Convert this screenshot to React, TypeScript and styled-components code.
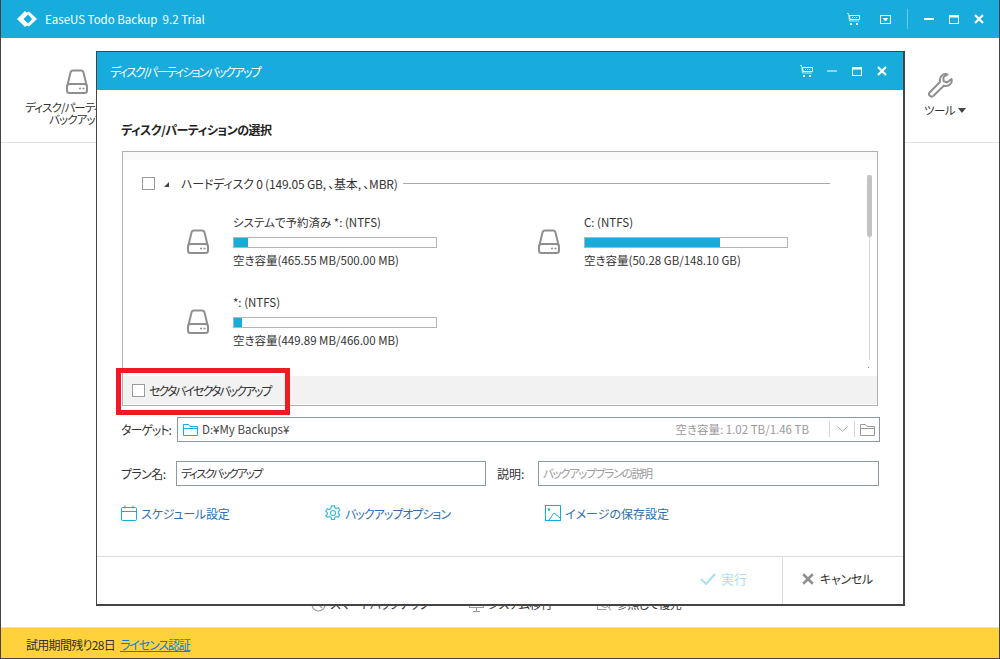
import styled, { createGlobalStyle } from "styled-components";

const GlobalStyle = createGlobalStyle`
    html, body {
        margin: 0;
        padding: 0;
        background: #fff;
    }
    * {
        box-sizing: border-box;
    }
    body {
        font-family: "Noto Sans CJK JP", "Open Sans", sans-serif;
        font-size: 12px;
        font-feature-settings: "palt";
        color: #333;
    }
`;

const Page = styled.div`
    position: relative;
    width: 1000px;
    height: 659px;
    display: flex;
    flex-direction: column;
    border-left: 1px solid #444;
    border-right: 1px solid #444;
    border-bottom: 1px solid #444;
    overflow: hidden;
`;

const TitleBar = styled.div`
    height: 38px;
    flex: none;
    display: flex;
    align-items: center;
    background: #17acdb;
    color: #fff;
    padding-left: 15px;
`;

const AppTitle = styled.span`
    margin-left: 7px;
    font-size: 11.5px;
    white-space: pre;
`;

const WindowControls = styled.div`
    margin-left: auto;
    display: flex;
    align-items: center;
    padding-right: 8px;
`;

const ControlSlot = styled.div<{ $w: number }>`
    width: ${p => p.$w}px;
    display: flex;
    justify-content: center;
    align-items: center;
`;

const Separator = styled.div`
    width: 1px;
    height: 20px;
    background: rgba(255, 255, 255, 0.35);
    margin: 0 8px 0 9px;
`;

const Toolbar = styled.div`
    height: 105px;
    flex: none;
    display: flex;
    justify-content: space-between;
    padding: 31px 33px 0 24px;
    border-bottom: 1px solid #e3e3e3;
`;

const ToolItem = styled.div`
    display: flex;
    flex-direction: column;
    align-items: center;
    color: #333;
    font-size: 11.5px;
    line-height: 12px;
    text-align: center;
    white-space: nowrap;
`;

const ToolLabel = styled.div`
    margin-top: 7px;
    letter-spacing: -0.9px;
`;

const WrenchSlot = styled.div`
    margin: 4px 9px 0 0;
    height: 25px;
`;

const ToolsLabel = styled.div`
    margin-top: 6px;
    display: flex;
    align-items: center;
    gap: 3px;
    letter-spacing: -0.6px;
`;

const Caret = styled.span`
    width: 0;
    height: 0;
    border-left: 4px solid transparent;
    border-right: 4px solid transparent;
    border-top: 5px solid #444;
`;

const Main = styled.div`
    flex: 1;
    display: flex;
    align-items: flex-end;
    padding: 0 0 15px 310px;
`;

const Shortcut = styled.div<{ $w: number }>`
    width: ${p => p.$w}px;
    display: flex;
    align-items: center;
    gap: 4px;
    font-size: 12px;
    line-height: 16px;
    letter-spacing: -0.6px;
    color: #333;
`;

const TrialBar = styled.div`
    height: 31px;
    flex: none;
    display: flex;
    align-items: center;
    gap: 5px;
    padding: 2px 0 0 25px;
    background: #ffd13b;
    border-top: 1px solid #e2e2e2;
    font-size: 12px;
    color: #333;
`;

const TrialText = styled.span`
    letter-spacing: -0.7px;
`;

const LicenseLink = styled.a`
    color: #0a7ad6;
    text-decoration: underline;
    letter-spacing: -1.1px;
`;

const Dialog = styled.div`
    position: absolute;
    left: 95px;
    top: 51px;
    width: 809px;
    height: 555px;
    display: flex;
    flex-direction: column;
    background: #fff;
    border: 2px solid #444;
    border-width: 1px 2px 2px 1px;
`;

const DialogHeader = styled.div`
    height: 38px;
    flex: none;
    display: flex;
    align-items: center;
    padding: 0 9px 0 13px;
    background: #17acdb;
    color: #fff;
`;

const DialogTitle = styled.span`
    letter-spacing: -1.8px;
`;

const DialogControls = styled.div`
    margin-left: auto;
    display: flex;
    align-items: center;
`;

const DialogBody = styled.div`
    flex: 1;
    display: flex;
    flex-direction: column;
    padding: 31px 24px 0 24px;
`;

const SectionTitle = styled.div`
    font-size: 12px;
    font-weight: 700;
    line-height: 18px;
    letter-spacing: -0.5px;
    color: #222;
`;

const ListBox = styled.div`
    position: relative;
    margin: 12px 0 0 1px;
    width: 756px;
    height: 255px;
    display: flex;
    flex-direction: column;
    border: 1px solid #b0b0b0;
`;

const ListScroll = styled.div`
    position: relative;
    flex: 1;
    padding: 8px 0 0 19px;
    border-top: 8px solid #fafafa;
`;

const DiskHeader = styled.div`
    display: flex;
    align-items: center;
    height: 20px;
    margin-top: 5px;
    margin-right: 47px;
`;

const CheckBox = styled.span`
    width: 13px;
    height: 13px;
    flex: none;
    background: #fff;
    border: 1px solid #9a9a9a;
`;

const Triangle = styled.span`
    width: 0;
    height: 0;
    margin: 2px 12px 0 9px;
    border-left: 5px solid transparent;
    border-bottom: 5px solid #444;
`;

const DiskName = styled.span`
    white-space: nowrap;
    letter-spacing: -0.2px;
    color: #333;
`;

const Rule = styled.span`
    flex: 1;
    height: 1px;
    margin-left: 5px;
    background: #aaa;
`;

const PartitionGrid = styled.div`
    display: grid;
    grid-template-columns: 351px 351px;
    grid-auto-rows: 80px;
    margin: 8px 0 0 45px;
`;

const Partition = styled.div`
    display: flex;
    align-items: center;
    gap: 24px;
`;

const PartitionInfo = styled.div`
    width: 204px;
    display: flex;
    flex-direction: column;
    font-size: 11.5px;
    line-height: 17px;
    white-space: nowrap;
`;

const Bar = styled.div`
    height: 11px;
    margin: 6px 0 4px;
    background: #fff;
    border: 1px solid #b4b4b4;
`;

const BarFill = styled.div`
    height: 100%;
    background: #17acdb;
`;

const ScrollThumb = styled.div`
    position: absolute;
    right: 5px;
    top: 15px;
    width: 5px;
    height: 62px;
    border-radius: 2px;
    background: #c3c3c3;
`;

const ScrollTrack = styled.div`
    position: absolute;
    right: 7px;
    top: 77px;
    width: 1px;
    height: 123px;
    background: #d8d8d8;
`;

const ScrollDot = styled.div`
    position: absolute;
    right: 8px;
    top: 207px;
    width: 1px;
    height: 1px;
    background: #888;
`;

const SectorStrip = styled.div`
    height: 29px;
    flex: none;
    display: flex;
    align-items: center;
    gap: 4px;
    padding-left: 9px;
    background: #f2f2f2;
    border-bottom: 1px solid #fff;
    letter-spacing: -2px;
`;

const RedMark = styled.div`
    position: absolute;
    left: -7px;
    top: 216px;
    width: 174px;
    height: 47px;
    border: 5px solid #ed1c24;
    pointer-events: none;
`;

const FormRow = styled.div<{ $top: number }>`
    display: flex;
    align-items: center;
    margin-top: ${p => p.$top}px;
    height: 25px;
`;

const FieldLabel = styled.label<{ $w: number; $tight: number }>`
    width: ${p => p.$w}px;
    flex: none;
    color: #333;
    letter-spacing: ${p => p.$tight}px;
    white-space: nowrap;
`;

const TargetField = styled.div`
    flex: 1;
    height: 25px;
    display: flex;
    align-items: center;
    padding: 0 0 1px 5px;
    border: 1px solid #8b9aa1;
    margin-right: -1px;
`;

const TargetPath = styled.span`
    margin-left: 4px;
    color: #444;
    font-size: 11.5px;
`;

const FreeSpace = styled.span`
    margin-left: auto;
    color: #9a9a9a;
    font-size: 11.5px;
`;

const FieldDivider = styled.span<{ $left: number }>`
    width: 1px;
    height: 16px;
    margin-left: ${p => p.$left}px;
    background: #d5d5d5;
`;

const TargetButton = styled.span`
    width: 24px;
    display: flex;
    justify-content: center;
`;

const TextField = styled.div<{ $w: number; $muted?: boolean }>`
    width: ${p => p.$w}px;
    flex: none;
    height: 25px;
    line-height: 22px;
    padding-left: 4px;
    border: 1px solid #8b9aa1;
    color: ${p => (p.$muted ? "#9a9a9a" : "#333")};
    font-size: 11.5px;
    letter-spacing: ${p => (p.$muted ? -1.4 : -1.9)}px;
`;

const PlanLabel = styled(FieldLabel)`
    margin-left: 11px;
`;

const Links = styled.div`
    display: flex;
    margin-top: 15px;
    height: 24px;
    align-items: center;
`;

const LinkItem = styled.div<{ $w: number; $tight?: number }>`
    width: ${p => p.$w}px;
    flex: none;
    display: flex;
    align-items: center;
    gap: 4px;
    color: #2f6db0;
    font-size: 12px;
    letter-spacing: ${p => p.$tight ?? 0}px;
`;

const Footer = styled.div`
    height: 48px;
    flex: none;
    display: flex;
    justify-content: flex-end;
    border-top: 1px solid #dcdcdc;
`;

const RunButton = styled.div`
    width: 122px;
    display: flex;
    align-items: center;
    padding: 0 0 4px 40px;
    gap: 5px;
    color: #a9dff0;
    font-size: 13px;
`;

const CancelButton = styled.div`
    width: 121px;
    display: flex;
    align-items: center;
    gap: 6px;
    padding: 0 0 4px 19px;
    border-left: 1px solid #dcdcdc;
    color: #333;
    font-size: 12px;
    letter-spacing: -0.3px;
`;

function DiskIcon() {
    return (
        <svg width="22" height="25" viewBox="0 0 22 25" fill="none" stroke="#8f8f8f" strokeWidth="2">
            <path d="M1.500 16 L4.500 3.500 Q5 1.500 7 1.500 H15 Q17 1.500 17.500 3.500 L20.500 16" />
            <rect x="1" y="15" width="20" height="9" rx="2.500" />
            <path d="M13 19.500h2M16.500 19.500h2" strokeWidth="1.600" />
        </svg>
    );
}

function CartIcon() {
    return (
        <svg width="13" height="12" viewBox="0 0 13 12" fill="none" stroke="#fff" strokeWidth="1">
            <path d="M0 .5h1.500l1 7.500h9.500" opacity=".7" />
            <path d="M2.500 2.500h10v4h-9.500z" />
            <path d="M5 4.500h1M7 4.500h1M9 4.500h1" />
            <path d="M3 10h2v2H3zM9 10h2v2H9z" fill="#fff" stroke="none" />
        </svg>
    );
}

function MinimizeIcon({ faded }: { faded?: boolean }) {
    return (
        <svg width="10" height="2" viewBox="0 0 10 2">
            <rect width="10" height="2" fill={faded ? "#8fd9ef" : "#fff"} />
        </svg>
    );
}

function MaximizeIcon() {
    return (
        <svg width="10" height="9" viewBox="0 0 10 9" fill="none" stroke="#fff">
            <rect x="0.500" y="0.500" width="9" height="8" />
            <rect x="0" y="0" width="10" height="2.500" fill="#fff" stroke="none" />
        </svg>
    );
}

function CloseIcon({ color = "#fff", size = 10 }: { color?: string; size?: number }) {
    return (
        <svg width={size} height={size} viewBox="0 0 10 10" stroke={color} strokeWidth="2.200">
            <path d="M1 1l8 8M9 1l-8 8" />
        </svg>
    );
}

function Logo() {
    return (
        <svg width="22" height="16" viewBox="0 0 22 16" fill="#fff">
            <path d="M9 0 L1 8 L9 16 L12.500 13 L7.500 8 L12.500 3 Z" />
            <path d="M13 0.500 L10.500 1.500 L16 8 L10.500 14.500 L13 15.500 L21 8 Z" />
        </svg>
    );
}

function Wrench() {
    return (
        <svg width="25" height="25" viewBox="0 0 25 25" fill="none" stroke="#8f8f8f" strokeWidth="2" strokeLinejoin="round">
            <path d="M23.500 6 L19 9.500 L15.500 8 L15.500 4 L19.500 1.500 C15 0 11 3.500 12 9 L1.800 19.200 C-.500 21.800 3 25 5.500 22.800 L15.800 12.800 C20.500 14 24.800 10.500 23.500 6 Z" />
        </svg>
    );
}

function FolderIcon({ color }: { color: string }) {
    return (
        <svg width="15" height="13" viewBox="0 0 15 13" fill="none" stroke={color}>
            <path d="M.5 12.500V1.500h5l1.500 2h7.500v9z" />
            <path d="M.5 5.500h14" />
        </svg>
    );
}

function CalendarIcon() {
    return (
        <svg width="16" height="16" viewBox="0 0 16 16" fill="none" stroke="#17acdb">
            <rect x="0.500" y="2.500" width="15" height="13" rx="1" />
            <path d="M.5 6.500h15M4 .5v3M12 .5v3" />
        </svg>
    );
}

function GearIcon() {
    return (
        <svg width="16" height="16" viewBox="0 0 16 16" fill="none" stroke="#3dbbe0" strokeWidth="1.200">
            <path d="M6.500.8h3l.4 2 1.500.8 1.900-.8 1.500 2.600-1.500 1.300v1.700l1.500 1.300-1.500 2.600-1.900-.8-1.500.8-.4 2h-3l-.4-2-1.500-.8-1.900.8L.8 10.700l1.500-1.300V7.700L.8 6.400l1.500-2.600 1.900.8 1.500-.8z" />
            <circle cx="8" cy="8" r="2.500" />
        </svg>
    );
}

function ImageIcon() {
    return (
        <svg width="16" height="16" viewBox="0 0 16 16" fill="none" stroke="#17acdb">
            <rect x="0.500" y="0.500" width="15" height="15" />
            <circle cx="4" cy="4.500" r="1.200" fill="#17acdb" stroke="none" />
            <path d="M4 15l5-7 6 5" />
        </svg>
    );
}

function SmartIcon() {
    return (
        <svg width="15" height="15" viewBox="0 0 15 15" fill="none" stroke="#999" strokeWidth="1.200">
            <circle cx="7.500" cy="7.500" r="6.500" />
            <path d="M4 4l7 7" />
        </svg>
    );
}

function MonitorIcon() {
    return (
        <svg width="15" height="15" viewBox="0 0 15 15" fill="none" stroke="#999">
            <rect x="0.500" y="0.500" width="14" height="10" />
            <path d="M7.500 10.500v4M4 14.500h7" />
        </svg>
    );
}

function BrowseIcon() {
    return (
        <svg width="15" height="15" viewBox="0 0 15 15" fill="none" stroke="#999">
            <path d="M.5.500h12v10M.5.500v12h9" />
            <circle cx="8" cy="7" r="3.500" />
            <path d="M10.500 9.500l3.500 4" />
        </svg>
    );
}

const partitions = [
    { name: "システムで予約済み *: (NTFS)", free: "空き容量(465.55 MB/500.00 MB)", used: 7 },
    { name: "C: (NTFS)", free: "空き容量(50.28 GB/148.10 GB)", used: 67 },
    { name: "*: (NTFS)", free: "空き容量(449.89 MB/466.00 MB)", used: 4 },
];

function App() {
    return (
        <>
            <GlobalStyle />
            <Page>
                <TitleBar>
                    <Logo />
                    <AppTitle>EaseUS Todo Backup  9.2 Trial</AppTitle>
                    <WindowControls>
                        <ControlSlot $w={37}><CartIcon /></ControlSlot>
                        <ControlSlot $w={26}>
                            <svg width="11" height="9" viewBox="0 0 11 9" fill="none" stroke="#fff">
                                <rect x="0.500" y="0.500" width="10" height="8" />
                                <path d="M3.500 3.500h4l-2 2.500z" fill="#fff" />
                            </svg>
                        </ControlSlot>
                        <Separator />
                        <ControlSlot $w={25}><MinimizeIcon /></ControlSlot>
                        <ControlSlot $w={25}><MaximizeIcon /></ControlSlot>
                        <ControlSlot $w={25}><CloseIcon /></ControlSlot>
                    </WindowControls>
                </TitleBar>

                <Toolbar>
                    <ToolItem>
                        <DiskIcon />
                        <ToolLabel>ディスク/パーティション<br />バックアップ</ToolLabel>
                    </ToolItem>
                    <ToolItem>
                        <WrenchSlot><Wrench /></WrenchSlot>
                        <ToolsLabel>ツール <Caret /></ToolsLabel>
                    </ToolItem>
                </Toolbar>

                <Main>
                    <Shortcut $w={158}><SmartIcon />スマートバックアップ</Shortcut>
                    <Shortcut $w={128}><MonitorIcon />システム移行</Shortcut>
                    <Shortcut $w={120}><BrowseIcon />参照して復元</Shortcut>
                </Main>

                <TrialBar>
                    <TrialText>試用期間残り28日</TrialText>
                    <LicenseLink>ライセンス認証</LicenseLink>
                </TrialBar>

                <Dialog>
                    <DialogHeader>
                        <DialogTitle>ディスク/パーティションバックアップ</DialogTitle>
                        <DialogControls>
                            <ControlSlot $w={25}><CartIcon /></ControlSlot>
                            <ControlSlot $w={25}><MinimizeIcon faded /></ControlSlot>
                            <ControlSlot $w={25}><MaximizeIcon /></ControlSlot>
                            <ControlSlot $w={25}><CloseIcon /></ControlSlot>
                        </DialogControls>
                    </DialogHeader>

                    <DialogBody>
                        <SectionTitle>ディスク/パーティションの選択</SectionTitle>
                        <ListBox>
                            <ListScroll>
                                <DiskHeader>
                                    <CheckBox />
                                    <Triangle />
                                    <DiskName>ハードディスク 0 (149.05 GB, 、基本, 、MBR)</DiskName>
                                    <Rule />
                                </DiskHeader>
                                <PartitionGrid>
                                    {partitions.map(item => (
                                        <Partition key={item.name}>
                                            <DiskIcon />
                                            <PartitionInfo>
                                                <span>{item.name}</span>
                                                <Bar>
                                                    <BarFill style={{ width: `${item.used}%` }} />
                                                </Bar>
                                                <span>{item.free}</span>
                                            </PartitionInfo>
                                        </Partition>
                                    ))}
                                </PartitionGrid>
                                <ScrollThumb />
                                <ScrollTrack />
                                <ScrollDot />
                            </ListScroll>
                            <SectorStrip>
                                <CheckBox />
                                <span>セクタバイセクタバックアップ</span>
                            </SectorStrip>
                            <RedMark />
                        </ListBox>

                        <FormRow $top={11}>
                            <FieldLabel $w={56} $tight={-1}>ターゲット:</FieldLabel>
                            <TargetField>
                                <FolderIcon color="#17acdb" />
                                <TargetPath>D:¥My Backups¥</TargetPath>
                                <FreeSpace>空き容量: 1.02 TB/1.46 TB</FreeSpace>
                                <FieldDivider $left={20} />
                                <TargetButton>
                                    <svg width="11" height="6" viewBox="0 0 11 6" fill="none" stroke="#aaa">
                                        <path d="M.5.500l5 5 5-5" />
                                    </svg>
                                </TargetButton>
                                <FieldDivider $left={0} />
                                <TargetButton><FolderIcon color="#999" /></TargetButton>
                            </TargetField>
                        </FormRow>

                        <FormRow $top={19}>
                            <FieldLabel $w={55} $tight={-0.6}>プラン名:</FieldLabel>
                            <TextField $w={310}>ディスクバックアップ</TextField>
                            <PlanLabel $w={41} $tight={0}>説明:</PlanLabel>
                            <TextField $w={341} $muted>バックアッププランの説明</TextField>
                        </FormRow>

                        <Links>
                            <LinkItem $w={204} $tight={-0.2}><CalendarIcon />スケジュール設定</LinkItem>
                            <LinkItem $w={220} $tight={-1}><GearIcon />バックアップオプション</LinkItem>
                            <LinkItem $w={200}><ImageIcon />イメージの保存設定</LinkItem>
                        </Links>
                    </DialogBody>

                    <Footer>
                        <RunButton>
                            <svg width="16" height="12" viewBox="0 0 16 12" fill="none" stroke="#a9dff0" strokeWidth="2">
                                <path d="M1 6l5 5 9-10" />
                            </svg>
                            実行
                        </RunButton>
                        <CancelButton>
                            <CloseIcon color="#8f8f8f" size={12} />
                            キャンセル
                        </CancelButton>
                    </Footer>
                </Dialog>
            </Page>
        </>
    );
}

export default App;
